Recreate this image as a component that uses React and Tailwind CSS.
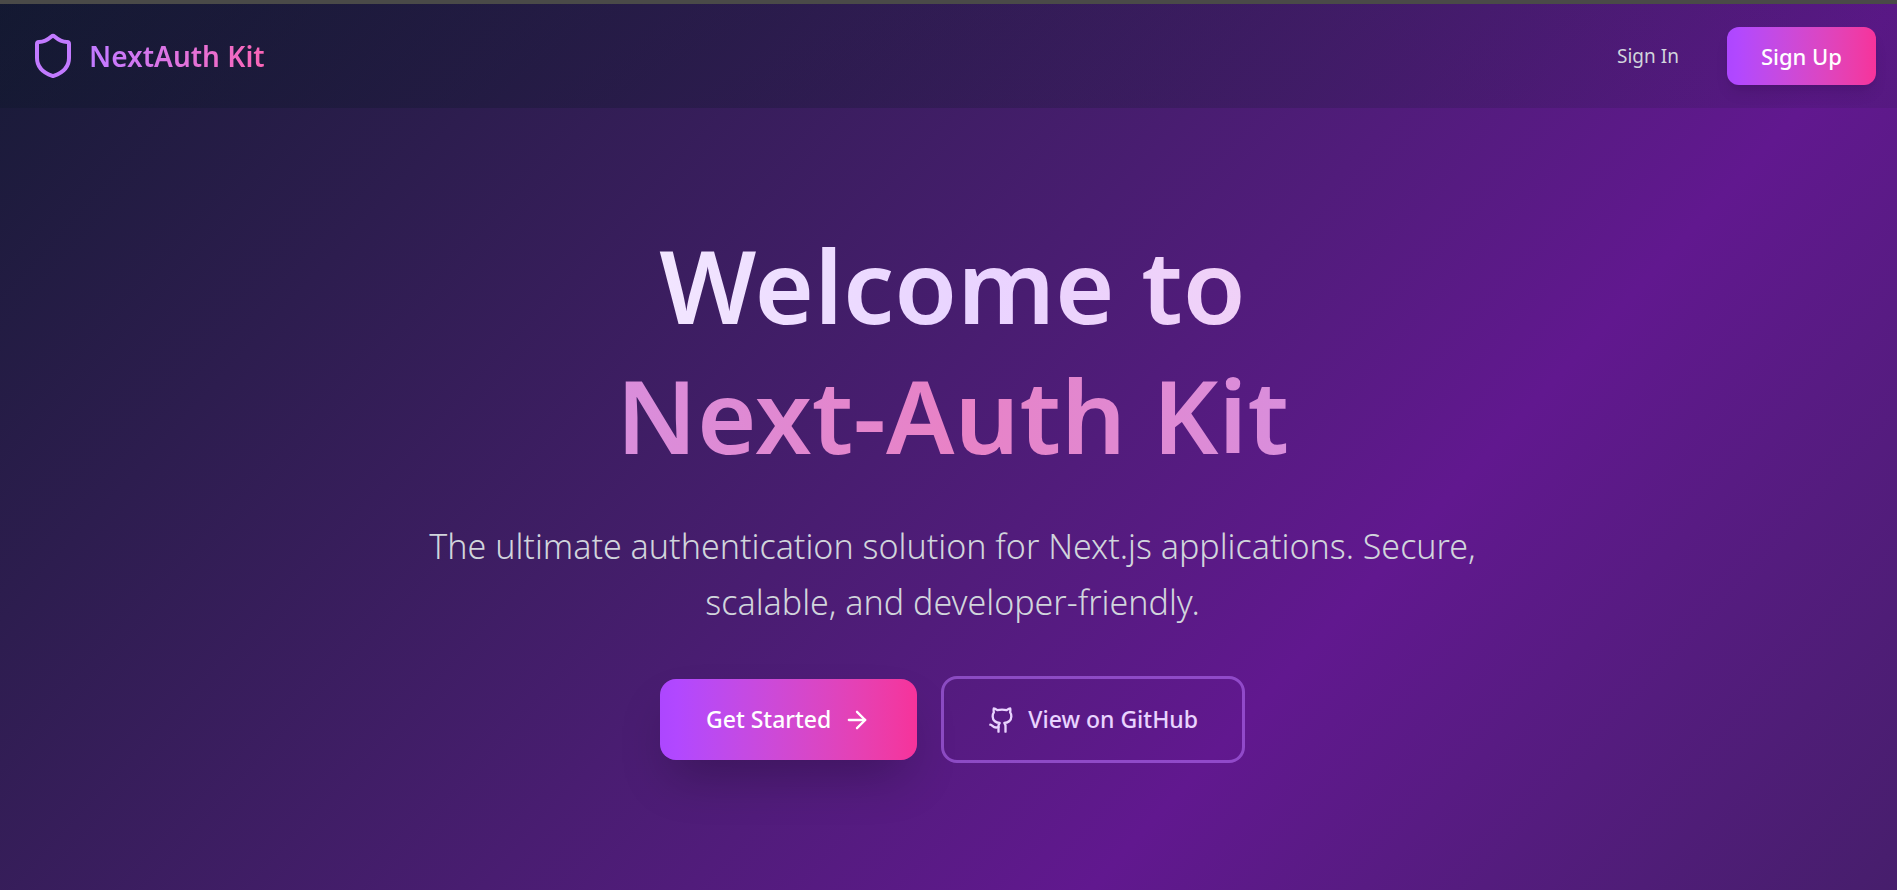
import { ArrowRight, Github, Shield } from 'lucide-react';

const Navbar = () => {
    return (
        <header className="flex items-center justify-between bg-gradient-to-r from-slate-900/40 to-slate-900/10 pl-[29px] pr-[21px] h-[104px]">
            <a href="#" className="flex items-center gap-3">
                <Shield className="w-12 h-12 text-purple-400" />
                <span className="bg-gradient-to-r from-purple-400 to-pink-400 bg-clip-text text-[28px] font-semibold text-transparent">
                    NextAuth Kit
                </span>
            </a>
            <nav className="flex items-center gap-12">
                <a href="#signin" className="text-[19px] text-gray-300">Sign In</a>
                <button className="h-[58px] rounded-xl bg-gradient-to-r from-purple-500 to-pink-500 px-[34px] text-[22px] font-medium text-white shadow-lg">
                    Sign Up
                </button>
            </nav>
        </header>
    );
};

const Hero = () => {
    return (
        <main className="flex flex-col items-center pl-9 pr-7 pt-28 text-center">
            <h1 className="text-[102px] font-semibold leading-[130px]">
                <span className="block bg-gradient-to-r from-[#f3e8ff] via-purple-200 to-[#f1d0f6] bg-clip-text text-transparent">
                    Welcome to
                </span>
                <span className="block bg-gradient-to-r from-[#d98edc] via-[#e882c6] to-[#d98edc] bg-clip-text text-transparent">
                    Next-Auth Kit
                </span>
            </h1>
            <p className="mt-[38px] max-w-[1110px] text-[34px] font-[350] leading-14 text-gray-300">
                The ultimate authentication solution for Next.js applications. Secure, scalable, and developer-friendly.
            </p>
            <div className="mt-[46px] flex items-center gap-6">
                <button className="flex h-[81px] items-center gap-3 rounded-2xl bg-gradient-to-r from-purple-500 to-pink-500 px-[46px] text-[23px] font-medium text-white shadow-2xl">
                    Get Started
                    <ArrowRight className="w-7 h-7" />
                </button>
                <button className="flex h-[87px] items-center gap-3 rounded-2xl border-[3px] border-purple-400/50 px-11 text-[23px] font-medium text-purple-200">
                    <Github className="w-7 h-7" />
                    View on GitHub
                </button>
            </div>
        </main>
    );
};

export default function App() {
    return (
        <div className="min-h-screen border-t-4 border-[#4a4a48] bg-gradient-to-br from-[#171a36] via-[#61188f] to-[#241d40] bg-[length:100%_2080px] bg-no-repeat font-['Noto_Sans',sans-serif]">
            <Navbar />
            <Hero />
        </div>
    );
}
